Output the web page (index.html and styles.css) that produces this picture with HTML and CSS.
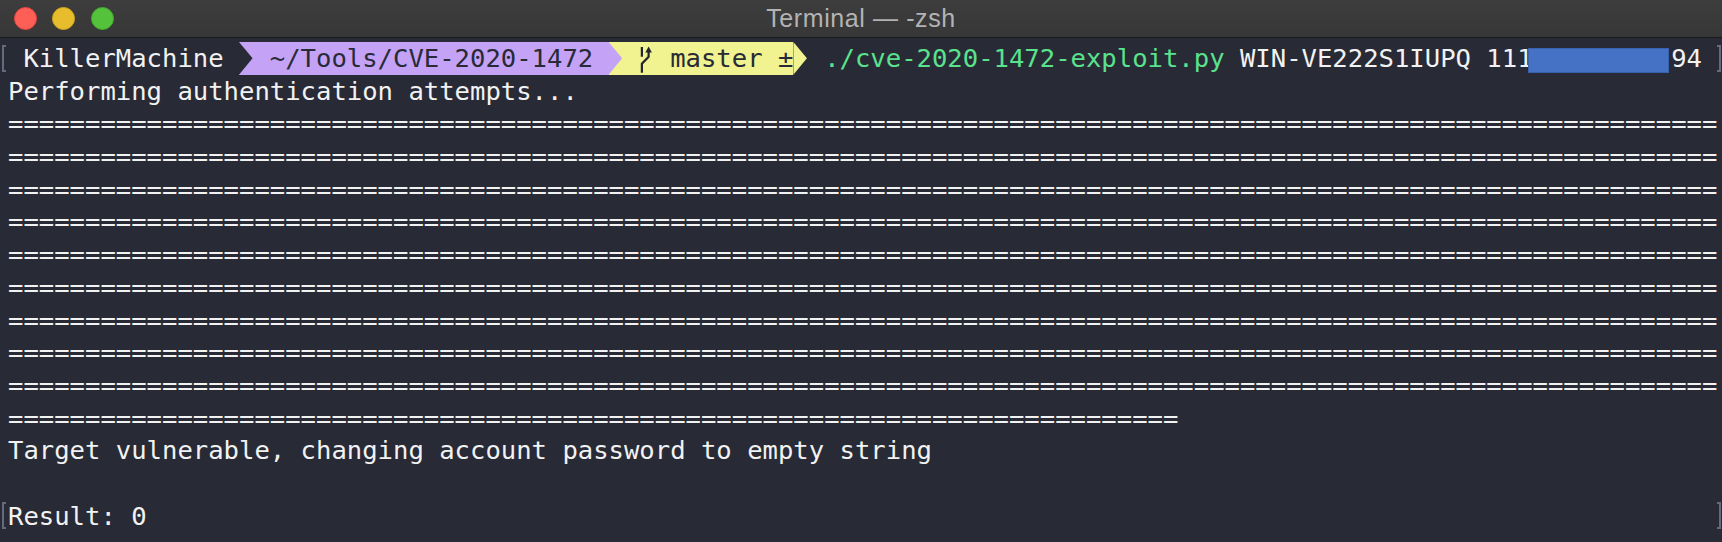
FILE: index.html
```html
<!DOCTYPE html>
<html lang="en">
<head>
<meta charset="utf-8">
<title>Terminal — -zsh</title>
<link rel="stylesheet" href="styles.css">
</head>
<body>
<div class="window">
  <header class="titlebar">
    <div class="lights">
      <span class="light red"></span>
      <span class="light yellow"></span>
      <span class="light green"></span>
    </div>
    <div class="title">Terminal — -zsh</div>
    <div class="spacer"></div>
  </header>
  <main class="term">
    <div class="row">
      <span class="mark mark-l"></span>
      <div class="line prompt">
        <span class="seg host"> KillerMachine </span>
        <span class="sep sep-dark-purple"></span>
        <span class="seg dir"> ~/Tools/CVE-2020-1472 </span>
        <span class="sep sep-purple-yellow"></span>
        <span class="seg git"> <svg class="branch" viewBox="0 0 16 33" preserveAspectRatio="none" aria-hidden="true"><path d="M3 5 V15 M3 31 V22 L10 15 V9" fill="none" stroke="#23252f" stroke-width="2.3"/><path d="M6.6 10.5 L10 4.5 L13.4 10.5 Z" fill="#23252f"/></svg> master ±</span>
        <span class="sep sep-yellow-dark"></span>
        <span class="cmd"> ./cve-2020-1472-exploit.py</span>
        <span class="plain"> WIN-VE222S1IUPQ 111</span>
        <span class="redact">.000.000.</span>
        <span class="plain">94</span>
      </div>
      <span class="mark mark-r"></span>
    </div>
    <div class="row">
      <span class="mark"></span>
      <div class="line">Performing authentication attempts...</div>
      <span class="mark"></span>
    </div>
    <div class="row">
      <span class="mark"></span>
      <div class="line">===============================================================================================================</div>
      <span class="mark"></span>
    </div>
    <div class="row">
      <span class="mark"></span>
      <div class="line">===============================================================================================================</div>
      <span class="mark"></span>
    </div>
    <div class="row">
      <span class="mark"></span>
      <div class="line">===============================================================================================================</div>
      <span class="mark"></span>
    </div>
    <div class="row">
      <span class="mark"></span>
      <div class="line">===============================================================================================================</div>
      <span class="mark"></span>
    </div>
    <div class="row">
      <span class="mark"></span>
      <div class="line">===============================================================================================================</div>
      <span class="mark"></span>
    </div>
    <div class="row">
      <span class="mark"></span>
      <div class="line">===============================================================================================================</div>
      <span class="mark"></span>
    </div>
    <div class="row">
      <span class="mark"></span>
      <div class="line">===============================================================================================================</div>
      <span class="mark"></span>
    </div>
    <div class="row">
      <span class="mark"></span>
      <div class="line">===============================================================================================================</div>
      <span class="mark"></span>
    </div>
    <div class="row">
      <span class="mark"></span>
      <div class="line">===============================================================================================================</div>
      <span class="mark"></span>
    </div>
    <div class="row">
      <span class="mark"></span>
      <div class="line">============================================================================</div>
      <span class="mark"></span>
    </div>
    <div class="row">
      <span class="mark"></span>
      <div class="line">Target vulnerable, changing account password to empty string</div>
      <span class="mark"></span>
    </div>
    <div class="row">
      <span class="mark"></span>
      <div class="line"></div>
      <span class="mark"></span>
    </div>
    <div class="row">
      <span class="mark mark-l"></span>
      <div class="line">Result: 0</div>
      <span class="mark mark-r"></span>
    </div>
  </main>
</div>
</body>
</html>
```

FILE: styles.css
```css
html, body {
  margin: 0;
  padding: 0;
  background: #282a36;
}

.window {
  width: 1722px;
  height: 542px;
  overflow: hidden;
  background: #282a36;
}

.titlebar {
  height: 37px;
  border-bottom: 1px solid #1b1b1d;
  background: linear-gradient(#3d3d3d, #373737);
  display: grid;
  grid-template-columns: 1fr auto 1fr;
  align-items: center;
}

.lights {
  display: flex;
  gap: 15.5px;
  padding-left: 13.5px;
}

.light {
  width: 23px;
  height: 23px;
  border-radius: 50%;
  box-sizing: border-box;
}

.red { background: #fd5f57; border: 1px solid #e2463f; }
.yellow { background: #e8bd2d; border: 1px solid #d0a41f; }
.green { background: #54c23a; border: 1px solid #3fa82a; }

.title {
  font-family: "Liberation Sans", Arial, sans-serif;
  font-size: 25px;
  color: #b3b3b3;
  letter-spacing: 0.6px;
}

.term {
  padding-top: 4px;
  font-family: "DejaVu Sans Mono", monospace;
  font-size: 25.58px;
  color: #f2f2f2;
}

.row {
  display: flex;
  height: 32.69px;
  line-height: 32.69px;
}

.mark {
  width: 8px;
  flex: none;
  display: flex;
  align-items: center;
}

.mark-l::before {
  content: "";
  display: block;
  width: 2px;
  height: 23px;
  margin-left: 2px;
  border: 2px solid #666a7d;
  border-right: none;
}

.mark-r::before {
  content: "";
  display: block;
  width: 2px;
  height: 23px;
  border: 2px solid #666a7d;
  border-left: none;
}

.line {
  width: 111ch;
  flex: none;
  white-space: pre;
}

.prompt {
  display: flex;
}

.prompt > span {
  white-space: pre;
  height: 32.69px;
}

.seg.dir { background: #c4a2f6; color: #282a36; }
.seg.git { background: #f0f38f; color: #282a36; }

.branch {
  display: inline-block;
  width: 1ch;
  height: 32.69px;
  vertical-align: top;
}

.sep {
  width: 1ch;
  display: block;
}

.sep::before {
  content: "";
  display: block;
  width: 100%;
  height: 100%;
  clip-path: polygon(0 0, 88% 50%, 0 100%);
}

.sep-dark-purple { background: #c4a2f6; }
.sep-dark-purple::before { background: #282a36; }
.sep-purple-yellow { background: #f0f38f; }
.sep-purple-yellow::before { background: #c4a2f6; }
.sep-yellow-dark { background: #282a36; }
.sep-yellow-dark::before { background: #f0f38f; }

.cmd { color: #5ae28d; }

.redact {
  position: relative;
  color: #282a36;
}

.redact::after {
  content: "";
  position: absolute;
  left: -5px;
  right: 2px;
  top: 6px;
  bottom: 2px;
  background: #4572c4;
  border: 1px solid #3862b0;
}
```
